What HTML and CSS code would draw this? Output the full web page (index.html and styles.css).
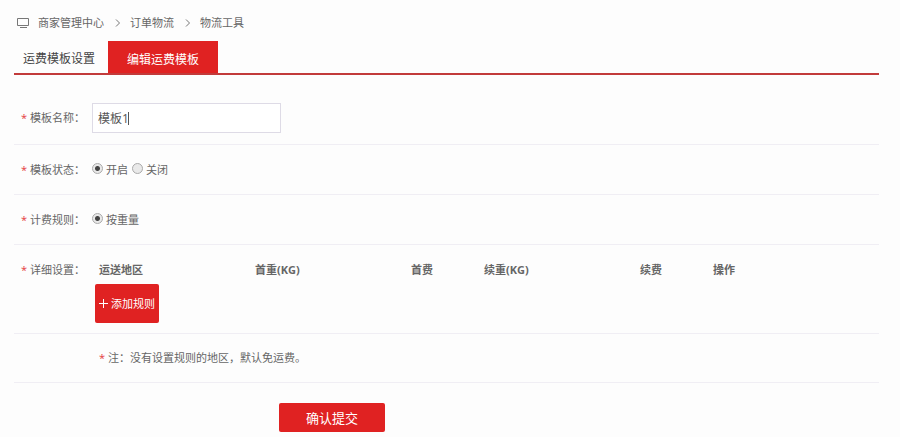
FILE: index.html
```html
<!DOCTYPE html>
<html lang="zh-CN">
<head>
  <meta charset="UTF-8" />
  <meta name="viewport" content="width=device-width, initial-scale=1.0" />
  <title>编辑运费模板</title>
  <link rel="stylesheet" href="styles.css">
</head>
<body>
  <nav class="breadcrumb">
    <svg class="icon-screen" width="13" height="10" viewBox="0 0 13 10" fill="none" stroke="#777">
      <path d="M0.5 0.5h11v7h-11z"/>
      <path d="M3 9.5h7"/>
    </svg>
    <a href="#">商家管理中心</a>
    <svg class="icon-arrow" width="6" height="8" viewBox="0 0 6 8" fill="none" stroke="#777"><path d="M1 0.5L4.5 4L1 7.5"/></svg>
    <a href="#">订单物流</a>
    <svg class="icon-arrow" width="6" height="8" viewBox="0 0 6 8" fill="none" stroke="#777"><path d="M1 0.5L4.5 4L1 7.5"/></svg>
    <a href="#">物流工具</a>
  </nav>

  <div class="tabs">
    <a class="tab" href="#">运费模板设置</a>
    <a class="tab active" href="#">编辑运费模板</a>
  </div>

  <form class="form">
    <div class="row">
      <label class="label" for="name"><i>*</i>模板名称：</label>
      <div class="field text-field">
        <input class="text" type="text" id="name" value="模板1">
        <span class="caret"></span>
      </div>
    </div>
    <div class="row">
      <span class="label"><i>*</i>模板状态：</span>
      <div class="field radios">
        <input type="radio" name="status" id="open" checked><label for="open">开启</label>
        <input type="radio" name="status" id="close"><label for="close">关闭</label>
      </div>
    </div>
    <div class="row">
      <span class="label"><i>*</i>计费规则：</span>
      <div class="field radios">
        <input type="radio" name="rule" id="weight" checked><label for="weight">按重量</label>
      </div>
    </div>
    <div class="row detail">
      <span class="label"><i>*</i>详细设置：</span>
      <div class="field grow">
        <table>
          <thead>
            <tr>
              <th class="wide">运送地区</th>
              <th class="wide">首重(KG)</th>
              <th class="narrow">首费</th>
              <th class="wide">续重(KG)</th>
              <th class="narrow">续费</th>
              <th>操作</th>
            </tr>
          </thead>
        </table>
        <button class="btn add" type="button">
          <svg width="9" height="9" viewBox="0 0 9 9" stroke="#fff"><path d="M4.5 0v9M0 4.5h9"/></svg>
          添加规则
        </button>
      </div>
    </div>
    <div class="row note">
      <p><i>*</i>注：没有设置规则的地区，默认免运费。</p>
    </div>
    <div class="actions">
      <button class="btn submit" type="submit">确认提交</button>
    </div>
  </form>
</body>
</html>
```
FILE: styles.css
```css
* { box-sizing: border-box; }
body {
  margin: 0;
  padding: 15px 21px 0 14px;
  background: #fdfdfd;
  color: #666;
  font-family: "Open Sans", "Noto Sans CJK SC", sans-serif;
  font-size: 11px;
  line-height: 16px;
}
a {
  color: inherit;
  text-decoration: none;
}
i {
  color: #e4393c;
  font-style: normal;
  margin-right: 3px;
}
.breadcrumb {
  display: flex;
  align-items: center;
  height: 16px;
  padding-left: 3px;
}
.icon-screen { margin-right: 8px; }
.icon-arrow { margin: 0 9px 0 11px; }
.tabs {
  display: flex;
  margin-top: 10px;
  border-bottom: 2px solid #c23b3b;
  font-size: 12px;
}
.tab {
  height: 32px;
  padding: 0 9px;
  line-height: 36px;
  color: #444;
}
.tab.active {
  padding: 0 19px;
  margin-left: 4px;
  line-height: 38px;
  background: #e02222;
  color: #fff;
}
.form { margin-top: 18px; }
.row {
  display: flex;
  align-items: center;
  min-height: 50px;
  padding: 10px 0;
  border-bottom: 1px solid #f0eef4;
}
.row:first-child { padding-bottom: 11px; }
.label {
  flex: none;
  width: 78px;
  padding-left: 7px;
}
.text-field {
  position: relative;
}
.text {
  display: block;
  width: 189px;
  height: 30px;
  padding: 0 5px;
  border: 1px solid #dedbe6;
  background: #fff;
  color: #555;
  font: inherit;
  font-size: 12px;
  outline: none;
}
.caret {
  position: absolute;
  left: 36px;
  top: 9px;
  width: 1px;
  height: 13px;
  background: #555;
}
.radios {
  display: flex;
  align-items: center;
}
.radios label { margin: 0 4px 0 3px; }
.radios input {
  appearance: none;
  width: 11px;
  height: 11px;
  margin: 0 0 3px;
  border: 1px solid #aaa;
  border-radius: 50%;
  background: #e9e9e9;
}
.radios input:checked {
  background: radial-gradient(circle, #444 0 2px, #e9e9e9 3px);
}
.detail {
  align-items: flex-start;
  padding: 17px 0 10px;
}
.grow { flex: 1; }
table {
  width: 100%;
  border-collapse: collapse;
  table-layout: fixed;
}
th {
  padding: 0 0 0 7px;
  text-align: left;
  font-weight: bold;
}
.wide { width: 156px; }
.narrow { width: 73px; }
.btn {
  border: none;
  border-radius: 2px;
  background: #e02222;
  color: #fff;
  font: inherit;
  cursor: pointer;
}
.add {
  display: flex;
  align-items: center;
  justify-content: center;
  gap: 3px;
  width: 64px;
  height: 39px;
  margin: 6px 0 0 3px;
  padding: 0;
}
.note {
  min-height: 49px;
  padding-left: 85px;
}
.note p { margin: 0; }
.actions {
  padding: 20px 0 4px 265px;
}
.submit {
  display: block;
  width: 106px;
  height: 29px;
  font-size: 13px;
}
```
